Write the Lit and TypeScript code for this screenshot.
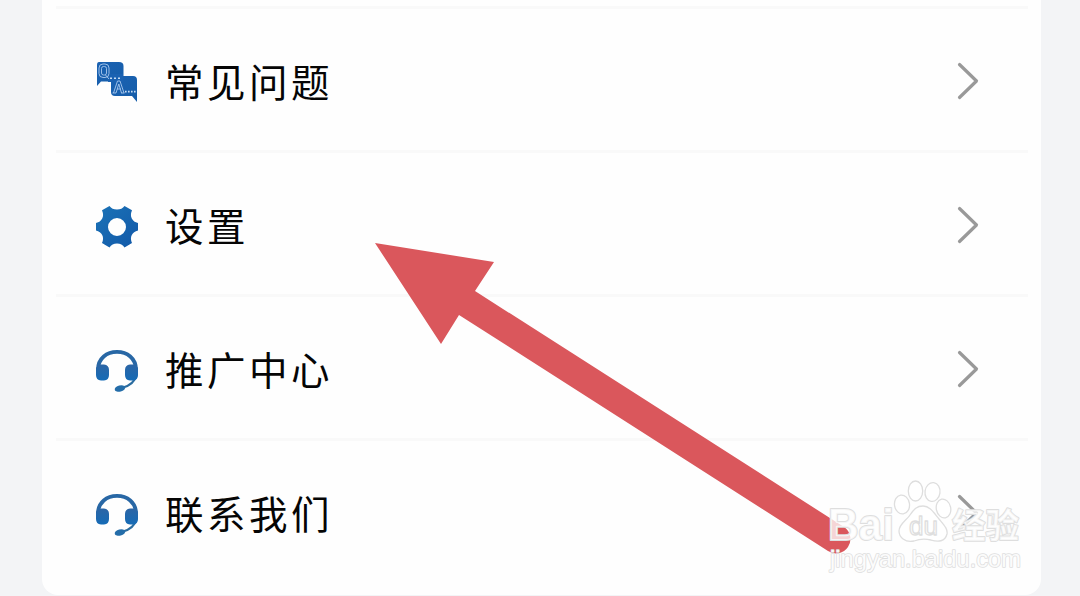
import { LitElement, html, svg, css } from "lit";
import { customElement, property } from "lit/decorators.js";

const chat = svg`
  <defs><linearGradient id="c" x2="1" y2="1"><stop stop-color="#1b62b2"/><stop offset="1" stop-color="#155da9"/></linearGradient></defs>
  <path fill="url(#c)" d="M3 0H23Q27.500 0 27.500 4V14H17Q14 14 14 17V19.500H5L1 24V3Q1 0 3 0Z"/>
  <path fill="url(#c)" d="M17 14H37Q41 14 41 18V40L36 34H19Q15 34 15 30V17Q15 14 17 14Z"/>
  <path fill="#1b62b2" d="M12 12H27V20H12Z"/>
  <g fill="none" stroke="#a9c8ee" stroke-width=".9">
    <rect x="3" y="2" width="10" height="13.500" rx="4"/><rect x="5.500" y="4.500" width="5" height="8.500" rx="2"/>
    <path d="M9.500 13L13 17M17.500 31L21.500 19H24L28 31M20 31L22.800 22L25.500 31M21 27H25M16.500 31H20M25 31H28.500"/>
  </g>
  <path fill="#c5dcf5" d="M14 15.500h2v1.600h-2zM18 15.500h2v1.600h-2zM22 15.500h2v1.600h-2zM29 28.800h1.600v1.600h-1.600zM32 28.800h1.600v1.600h-1.600zM35 28.800h1.600v1.600h-1.600zM38 28.800h1.600v1.600h-1.600z"/>`;

const gear = svg`
  <defs><linearGradient id="g" x2="1" y2="1"><stop stop-color="#1b73b7"/><stop offset="1" stop-color="#1258a8"/></linearGradient></defs>
  <path fill="url(#g)" fill-rule="evenodd" d="M13.500 0Q16 3.500 21 3.500Q26 3.500 28.500 0L36 4.200Q34 9 35.800 12.500Q37.500 16 42 17V24.500Q37.500 25.500 35.800 29Q34 32.500 36 37L28.500 41.500Q26 37.500 21 37.500Q16 37.500 13.500 41.500L6 37Q8 32.500 6.200 29Q4.500 25.500 0 24.500V17Q4.500 16 6.200 12.500Q8 9 6 4.200Z
    M21 12A9 9 0 1 0 21 30A9 9 0 1 0 21 12Z"/>`;

const headset = svg`
  <defs><linearGradient id="h" x2="0" y2="1"><stop stop-color="#2c65a5"/><stop offset="1" stop-color="#156bb6"/></linearGradient></defs>
  <path fill="none" stroke="#2867a5" stroke-width="3.800" d="M1.900 20C2 8 11 1.900 21 1.900S40 8 40.100 20"/>
  <path fill="none" stroke="#2b6c9f" stroke-width="2.200" d="M40.500 25Q38 34.500 27 37.500"/>
  <path fill="url(#h)" d="M0 18Q2 14.500 5 14.500H8Q13 15 13 20V25Q13 30 8 30.500H5Q0 30 0 25ZM42 18Q40 14.500 37 14.500H34Q29 15 29 20V25Q29 30 34 30.500H37Q42 30 42 25Z"/>
  <ellipse cx="24" cy="38.500" rx="5.400" ry="3.100" transform="rotate(-15 24 38.500)" fill="#246da9"/>`;

@customElement("menu-row")
class MenuRow extends LitElement {
  @property() label = "";
  @property({ attribute: false }) icon: unknown;
  static styles = css`
    :host { display: flex; align-items: center; height: 144px; box-sizing: border-box; padding: 3px 49px 0 40px; border-top: 3px solid #f9f9f9; }
    .icon { width: 42px; height: 42px; flex: none; overflow: visible; margin-top: 4px; }
    .label { flex: 1; margin: 0 0 2px 27px; font: 38.500px/56px "Noto Sans CJK SC", sans-serif; letter-spacing: 3.500px; color: #050505; }
    .chevron { width: 22px; height: 38px; margin-bottom: 1px; }
  `;
  render() {
    return html`
      <svg class="icon" viewBox="0 0 42 42">${this.icon}</svg>
      <span class="label">${this.label}</span>
      <svg class="chevron" viewBox="0 0 22 38"><path d="M2.500 2.500L19.500 19L2.500 35.500" fill="none" stroke="#999" stroke-width="3.200" stroke-linecap="round" stroke-linejoin="round"/></svg>`;
  }
}

@customElement("app-root")
class AppRoot extends LitElement {
  static styles = css`
    :host { display: block; position: relative; height: 596px; overflow: hidden; background: #f3f4f6; }
    .card { height: 595px; box-sizing: border-box; margin: 0 39px 0 42px; padding: 6px 13px 0 14px; background: #fefefe; border-radius: 0 0 16px 16px; }
    .overlay { position: absolute; inset: 0; width: 1080px; height: 596px; }
    .mark { font-family: "Liberation Sans", sans-serif; fill: #fff; fill-opacity: .65; stroke: #dedede; stroke-width: 1.300; stroke-linejoin: round; }
    .bai { font-size: 44px; font-weight: 700; stroke-width: 2; paint-order: stroke; fill-opacity: .75; }
    .du { font-size: 26px; }
    .cjk { font-family: "Noto Sans CJK SC", sans-serif; font-size: 34px; font-weight: 700; stroke-width: 2; paint-order: stroke; fill-opacity: .75; }
    .site { font-size: 24px; stroke-width: 1.600; paint-order: stroke; fill-opacity: .9; }
  `;
  render() {
    const rows = [
      { label: "常见问题", icon: chat },
      { label: "设置", icon: gear },
      { label: "推广中心", icon: headset },
      { label: "联系我们", icon: headset },
    ];
    return html`
      <main class="card">${rows.map((r) => html`<menu-row .label=${r.label} .icon=${r.icon}></menu-row>`)}</main>
      <svg class="overlay" viewBox="0 0 1080 596">
        <path fill="#da575c" d="M375 243L494 262L475 291L844 527A14 14 0 0 1 828 551L459 315L441 344Z"/>
        <g class="mark">
          <text class="bai" x="828" y="540" textLength="66" lengthAdjust="spacingAndGlyphs">Bai</text>
          <ellipse cx="915.500" cy="491" rx="7.200" ry="10"/>
          <ellipse cx="932.500" cy="492" rx="7.500" ry="9.500" transform="rotate(8 932.500 492)"/>
          <ellipse cx="902" cy="504.500" rx="7.500" ry="9.500" transform="rotate(-8 902 504.500)"/>
          <ellipse cx="943.500" cy="508.500" rx="7.200" ry="9.500" transform="rotate(-12 943.500 508.500)"/>
          <path d="M923 506C930 506 934 513 939 519C944 525 948 529 947 534C945 542 938 542 931 540Q922 538 914 541C905 543 899 537 899 531C899 524 907 520 910 515C914 509 917 506 923 506Z"/>
          <text class="du" x="909" y="535" textLength="29" lengthAdjust="spacingAndGlyphs">du</text>
          <text class="cjk" x="952" y="538" textLength="67" lengthAdjust="spacingAndGlyphs">经验</text>
          <text class="site" x="830" y="567" textLength="191" lengthAdjust="spacingAndGlyphs">jingyan.baidu.com</text>
        </g>
      </svg>`;
  }
}
